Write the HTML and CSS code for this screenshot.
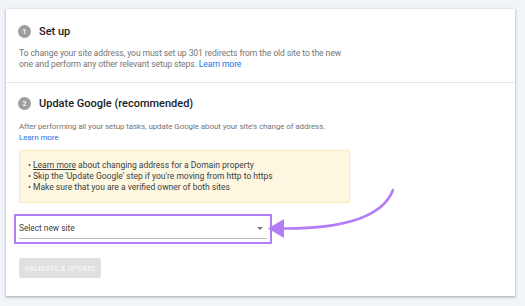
FILE: index.html
```html
<!DOCTYPE html>
<html>
<head>
<meta charset="utf-8">
<link rel="stylesheet" href="styles.css">
</head>
<body>
<div class="card">
  <section class="step step-first">
    <div class="step-head"><span class="num">1</span><h2>Set up</h2></div>
    <p class="desc desc-lg">To change your site address, you must set up 301 redirects from the old site to the new<br>one and perform any other relevant setup steps. <a class="link" href="#">Learn more</a></p>
  </section>
  <section class="step step-second">
    <div class="step-head"><span class="num">2</span><h2>Update Google (recommended)</h2></div>
    <p class="desc">After performing all your setup tasks, update Google about your site's change of address.<br><a class="link" href="#">Learn more</a></p>
    <ul class="notice">
      <li><span class="u">Learn more</span> about changing address for a Domain property</li>
      <li>Skip the 'Update Google' step if you're moving from http to https</li>
      <li>Make sure that you are a verified owner of both sites</li>
    </ul>
    <div class="highlight">
      <div class="select"><span>Select new site</span><span class="caret"></span></div>
    </div>
    <button class="btn">VALIDATE &amp; UPDATE</button>
  </section>
  <svg class="arrow" width="525" height="306" viewBox="0 0 525 306">
    <path d="M393 190 Q378 229 283 228.5" fill="none" stroke="#b57cf7" stroke-width="2.6" stroke-linecap="round"/>
    <path d="M268 228.5 L284 219 L284 238 Z" fill="#b57cf7"/>
  </svg>
</div>
</body>
</html>
```
FILE: styles.css
```css
* { box-sizing: border-box; }
html, body { margin: 0; padding: 0; }
body {
  background: #f1f4f9;
  font-family: Roboto, "Noto Sans", sans-serif;
  width: 525px;
  height: 306px;
  overflow: hidden;
}
.card {
  margin: 9px 0 0 6px;
  width: 509px;
  height: 287px;
  background: #fff;
  box-shadow: 0 1px 2px rgba(60,64,67,.3), 0 1px 3px 1px rgba(60,64,67,.12);
  position: relative;
}
.step { padding: 0 13px; }
.step-first {
  padding-top: 16px;
  padding-bottom: 12px;
  border-bottom: 1px solid #e6e6e6;
}
.step-second { padding-top: 14px; }
.step-head {
  display: flex;
  align-items: center;
  gap: 8px;
  height: 13px;
}
.num {
  width: 13px;
  height: 13px;
  border-radius: 50%;
  background: #9e9e9e;
  color: #fff;
  font-size: 7.5px;
  font-weight: 500;
  display: flex;
  align-items: center;
  justify-content: center;
  margin-left: -1px;
}
h2 {
  margin: 0;
  font-size: 11px;
  font-weight: 500;
  color: #202124;
  line-height: 13px;
}
.desc {
  margin: 10px 0 0;
  max-width: 345px;
  font-size: 8px;
  line-height: 11px;
  letter-spacing: -0.1px;
  color: #757575;
}
.desc-lg { font-size: 8.6px; }
.step-second .desc { margin-top: 11px; }
.link { color: #1a73e8; text-decoration: none; }
.notice {
  list-style: none;
  margin: 7px 0 0;
  padding: 9px 8px;
  width: 331px;
  background: #fef7e0;
  border: 1px solid #fbe9b7;
  border-radius: 2px;
  font-size: 8.5px;
  line-height: 11px;
  color: #3c4043;
}
.notice li::before { content: "\2022\00a0"; }
.u { text-decoration: underline; }
.highlight {
  margin: 11px 0 0 -5px;
  width: 258px;
  height: 30px;
  border: 2px solid #b57cf7;
  padding: 6px 3px 0 3px;
}
.select {
  height: 17px;
  border-bottom: 1px solid #bdbdbd;
  display: flex;
  align-items: center;
  justify-content: space-between;
  font-size: 8.3px;
  color: #3c4043;
  padding-bottom: 4px;
}
.caret {
  width: 0;
  height: 0;
  border-left: 3px solid transparent;
  border-right: 3px solid transparent;
  border-top: 3px solid #757575;
  margin-right: 4px;
}
.btn {
  display: block;
  margin-top: 14px;
  width: 82px;
  height: 20px;
  background: #e0e0e0;
  border: none;
  border-radius: 2px;
  color: #f7f7f7;
  font-family: Roboto, sans-serif;
  font-size: 7.4px;
  font-weight: 500;
  letter-spacing: 0.1px;
  padding: 0;
}
.arrow {
  position: absolute;
  left: -6px;
  top: -9px;
  pointer-events: none;
}
```
